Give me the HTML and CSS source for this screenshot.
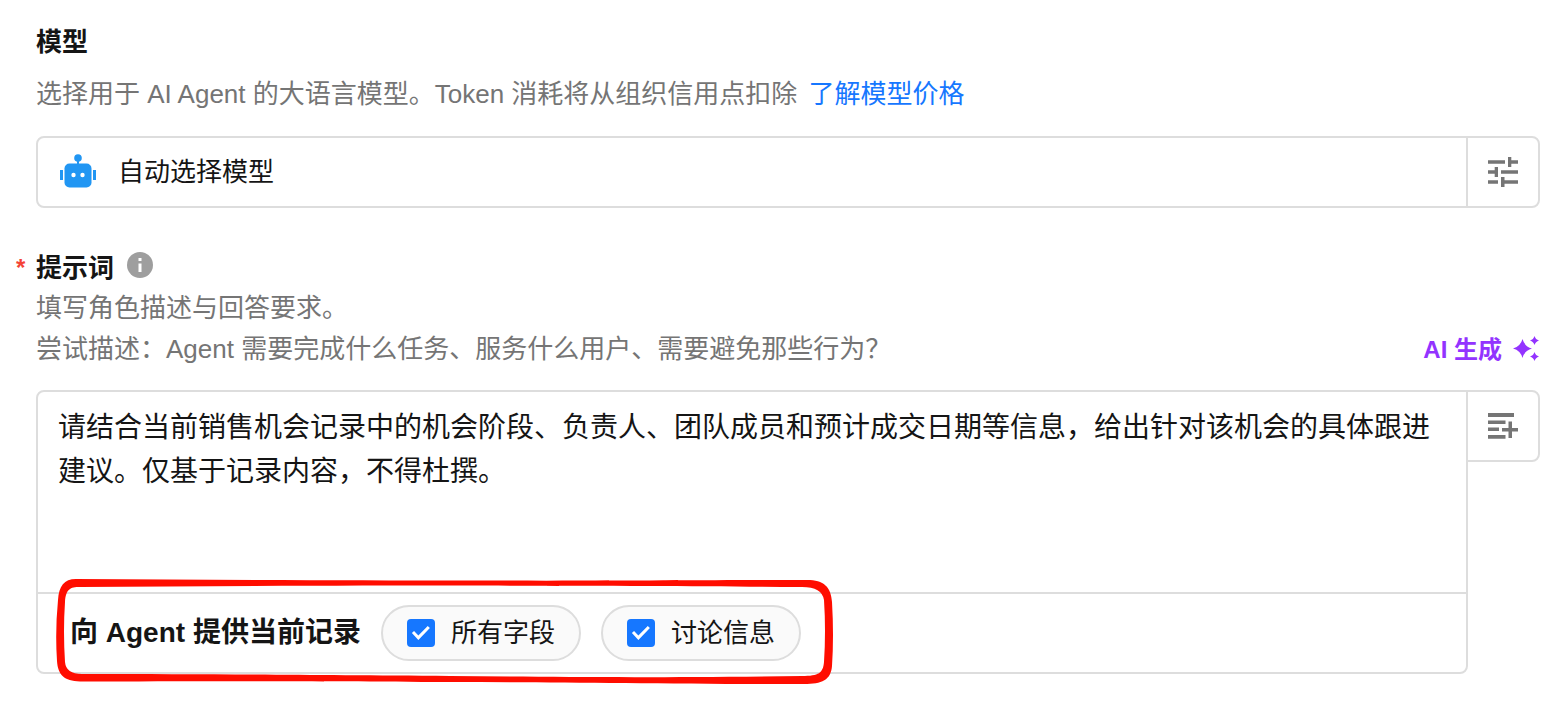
FILE: index.html
```
<!DOCTYPE html>
<html lang="zh-CN">
<head>
<meta charset="utf-8">
<meta name="viewport" content="width=device-width, initial-scale=1">
<title>AI Agent</title>
<link rel="stylesheet" href="styles.css">
</head>
<body>
<main class="form">
  <section class="section">
    <h2 class="title"><label for="model">模型</label></h2>
    <p class="desc">选择用于 AI Agent 的大语言模型。Token 消耗将从组织信用点扣除 <a class="link" href="#pricing">了解模型价格</a></p>
    <div class="row model-row">
      <div class="picker">
        <svg class="robot" viewBox="0 0 38 36" aria-hidden="true">
          <circle cx="19" cy="4" r="3.8"/>
          <path d="M18 6h2v5h-2z"/>
          <rect x="5.5" y="9.500" width="27" height="24" rx="5"/>
          <rect x="1" y="16" width="3" height="10"/>
          <rect x="34" y="16" width="3" height="10"/>
          <circle class="eye" cx="14.500" cy="21" r="2.200"/>
          <circle class="eye" cx="23.500" cy="21" r="2.200"/>
        </svg>
        <select class="select" id="model"><option>自动选择模型</option></select>
      </div>
      <button class="side" type="button" aria-label="模型设置">
        <svg class="side-icon" viewBox="0 0 32 32" aria-hidden="true">
          <path d="M1 4.200h17v3.500H1zM21 1h3.300v3.200H31v3.500h-6.700V11H21zM7.700 11H11v10H7.700v-3.300H1v-3.500h6.700zM14 14.200h17v3.500H14zM1 24.200h10v3.500H1zM14 21h3.500v3.200H31v3.500H17.500V31H14z"/>
        </svg>
      </button>
    </div>
  </section>

  <section class="section prompt">
    <h2 class="title prompt-title">
      <span class="required">*</span>
      <label for="prompt">提示词</label>
      <svg class="info" viewBox="0 0 26 26" role="img" aria-label="说明">
        <circle cx="13" cy="13" r="13"/>
        <path class="info-mark" d="M11.500 6h3v3h-3zM11.500 11.500h3V20h-3z"/>
      </svg>
    </h2>
    <div class="desc-row">
      <p class="desc hint">填写角色描述与回答要求。<br>尝试描述：Agent 需要完成什么任务、服务什么用户、需要避免那些行为？</p>
      <button class="generate" type="button">AI 生成
        <svg class="sparkle" viewBox="0 0 28 28" aria-hidden="true">
          <path d="M10.500 3Q12.500 10.500 20 12.500Q12.500 14.500 10.500 22Q8.500 14.500 1 12.500Q8.500 10.500 10.500 3ZM22.500 0Q23.500 3.500 27 4.500Q23.500 5.500 22.500 9Q21.500 5.500 18 4.500Q21.500 3.500 22.500 0ZM22.500 16Q23.500 19.500 27 20.500Q23.500 21.500 22.500 25Q21.500 21.500 18 20.500Q21.500 19.500 22.500 16Z"/>
        </svg>
      </button>
    </div>
    <div class="row">
      <div class="editor">
        <textarea class="text" id="prompt">请结合当前销售机会记录中的机会阶段、负责人、团队成员和预计成交日期等信息，给出针对该机会的具体跟进建议。仅基于记录内容，不得杜撰。</textarea>
        <div class="footer">
          <span class="footer-label">向 Agent 提供当前记录</span>
          <label class="chip"><input class="check" type="checkbox" checked>所有字段</label>
          <label class="chip"><input class="check" type="checkbox" checked>讨论信息</label>
          <svg class="marker" viewBox="0 0 784 112" aria-hidden="true">
            <path fill-rule="evenodd" d="M24 3C160 4 300 4.500 410 4.500C560 5 660 4 755 4C772 4 779 11 780 26Q782 60 780 90C779 104 770 108 752 108C600 108 500 106 398 106C250 105 160 105 28 105.500C12 105 6 99 5 85Q3 55 6 24C7 10 12 3 24 3ZM28 11C160 10 300 9.500 410 9.500C560 10 650 10 750 11Q770 11 772 24Q774 55 772 86C771 97 767 100 750 100C600 102 500 101 398 100C250 99 160 98 30 98Q14 98 13 86Q11 55 13 26C14 13 18 11 28 11Z"/>
          </svg>
        </div>
      </div>
      <button class="side" type="button" aria-label="插入字段">
        <svg class="side-icon" viewBox="0 0 32 32" aria-hidden="true">
          <path d="M1 3h26v4H1zM1 10.500h17.500V14H1zM1 17.500h11V21H1zM1 25h17.500v3.700H1zM15 18h6.500v-6.500H25V18h6v3.500h-6V28h-3.500v-6.500H15z"/>
        </svg>
      </button>
    </div>
  </section>
</main>
</body>
</html>
```
FILE: styles.css
```
* { box-sizing: border-box; }

body {
  margin: 0;
  background: #fff;
  color: #151515;
  font-family: "Liberation Sans", "Noto Sans CJK SC", sans-serif;
  font-size: 26px;
}

button, select, textarea { font: inherit; color: inherit; }

.form { padding: 22px 28px 28px 36px; }

.title {
  margin: 0;
  font-size: 26px;
  font-weight: 600;
  line-height: 40px;
}

.desc {
  margin: 12px 0 22px;
  color: #757575;
  line-height: 40px;
}

.link { color: #1677ff; text-decoration: none; margin-left: 4px; }

.row { display: flex; align-items: flex-start; }

.picker {
  position: relative;
  flex: 1;
  display: flex;
  align-items: center;
  height: 72px;
  border: 2px solid #ddd;
  border-radius: 8px 0 0 8px;
}

.robot {
  position: absolute;
  left: 21px;
  width: 38px;
  height: 36px;
  fill: #2196f3;
  pointer-events: none;
}

.eye { fill: #fff; }

.select {
  appearance: none;
  flex: 1;
  height: 100%;
  border: 0;
  padding: 0 20px 0 80px;
  background: transparent;
}

.side {
  display: flex;
  align-items: center;
  justify-content: center;
  width: 74px;
  height: 72px;
  margin-left: -2px;
  padding: 0;
  border: 2px solid #ddd;
  border-radius: 0 8px 8px 0;
  background: #fff;
}

.side-icon { width: 32px; height: 32px; fill: #757575; }

.prompt { margin-top: 40px; }

.prompt-title { display: flex; align-items: center; margin-left: -20px; }

.required {
  width: 20px;
  color: #f44336;
  font-size: 24px;
}

.info {
  width: 26px;
  height: 26px;
  margin: 0 0 6px 13px;
  fill: #9e9e9e;
}

.info-mark { fill: #fff; }

.desc-row {
  display: flex;
  align-items: flex-end;
  justify-content: space-between;
  margin-bottom: 20px;
}

.hint { margin: 0; line-height: 41px; }

.generate {
  display: flex;
  align-items: center;
  gap: 10px;
  padding: 0;
  border: 0;
  background: none;
  color: #9333ff;
  font-size: 24px;
  font-weight: 600;
  line-height: 40px;
}

.sparkle { width: 28px; height: 28px; fill: #9333ff; }

.editor {
  flex: 1;
  border: 2px solid #ddd;
  border-radius: 8px 0 8px 8px;
}

.text {
  display: block;
  width: 100%;
  height: 200px;
  padding: 14px 20px;
  border: 0;
  outline: 0;
  resize: none;
  background: transparent;
  font-size: 28px;
  line-height: 44px;
}

.footer {
  position: relative;
  display: flex;
  align-items: center;
  gap: 20px;
  height: 80px;
  padding-left: 32px;
  border-top: 2px solid #ddd;
}

.footer-label {
  font-size: 28px;
  font-weight: 600;
  line-height: 40px;
}

.chip {
  display: flex;
  align-items: center;
  gap: 16px;
  height: 56px;
  padding: 0 24px;
  border: 2px solid #ddd;
  border-radius: 28px;
  background: #fafafa;
  line-height: 40px;
}

.check {
  appearance: none;
  width: 28px;
  height: 28px;
  margin: 0;
  border-radius: 4px;
  background: #1677ff;
  display: grid;
  place-items: center;
}

.check:checked::before {
  content: "";
  width: 18px;
  height: 14px;
  background: #fff;
  clip-path: polygon(0 50%, 12% 35%, 36% 68%, 88% 0, 100% 14%, 36% 100%);
}

.marker {
  position: absolute;
  left: 14px;
  top: -18px;
  width: 784px;
  height: 112px;
  fill: #ff0d00;
  pointer-events: none;
}
```
